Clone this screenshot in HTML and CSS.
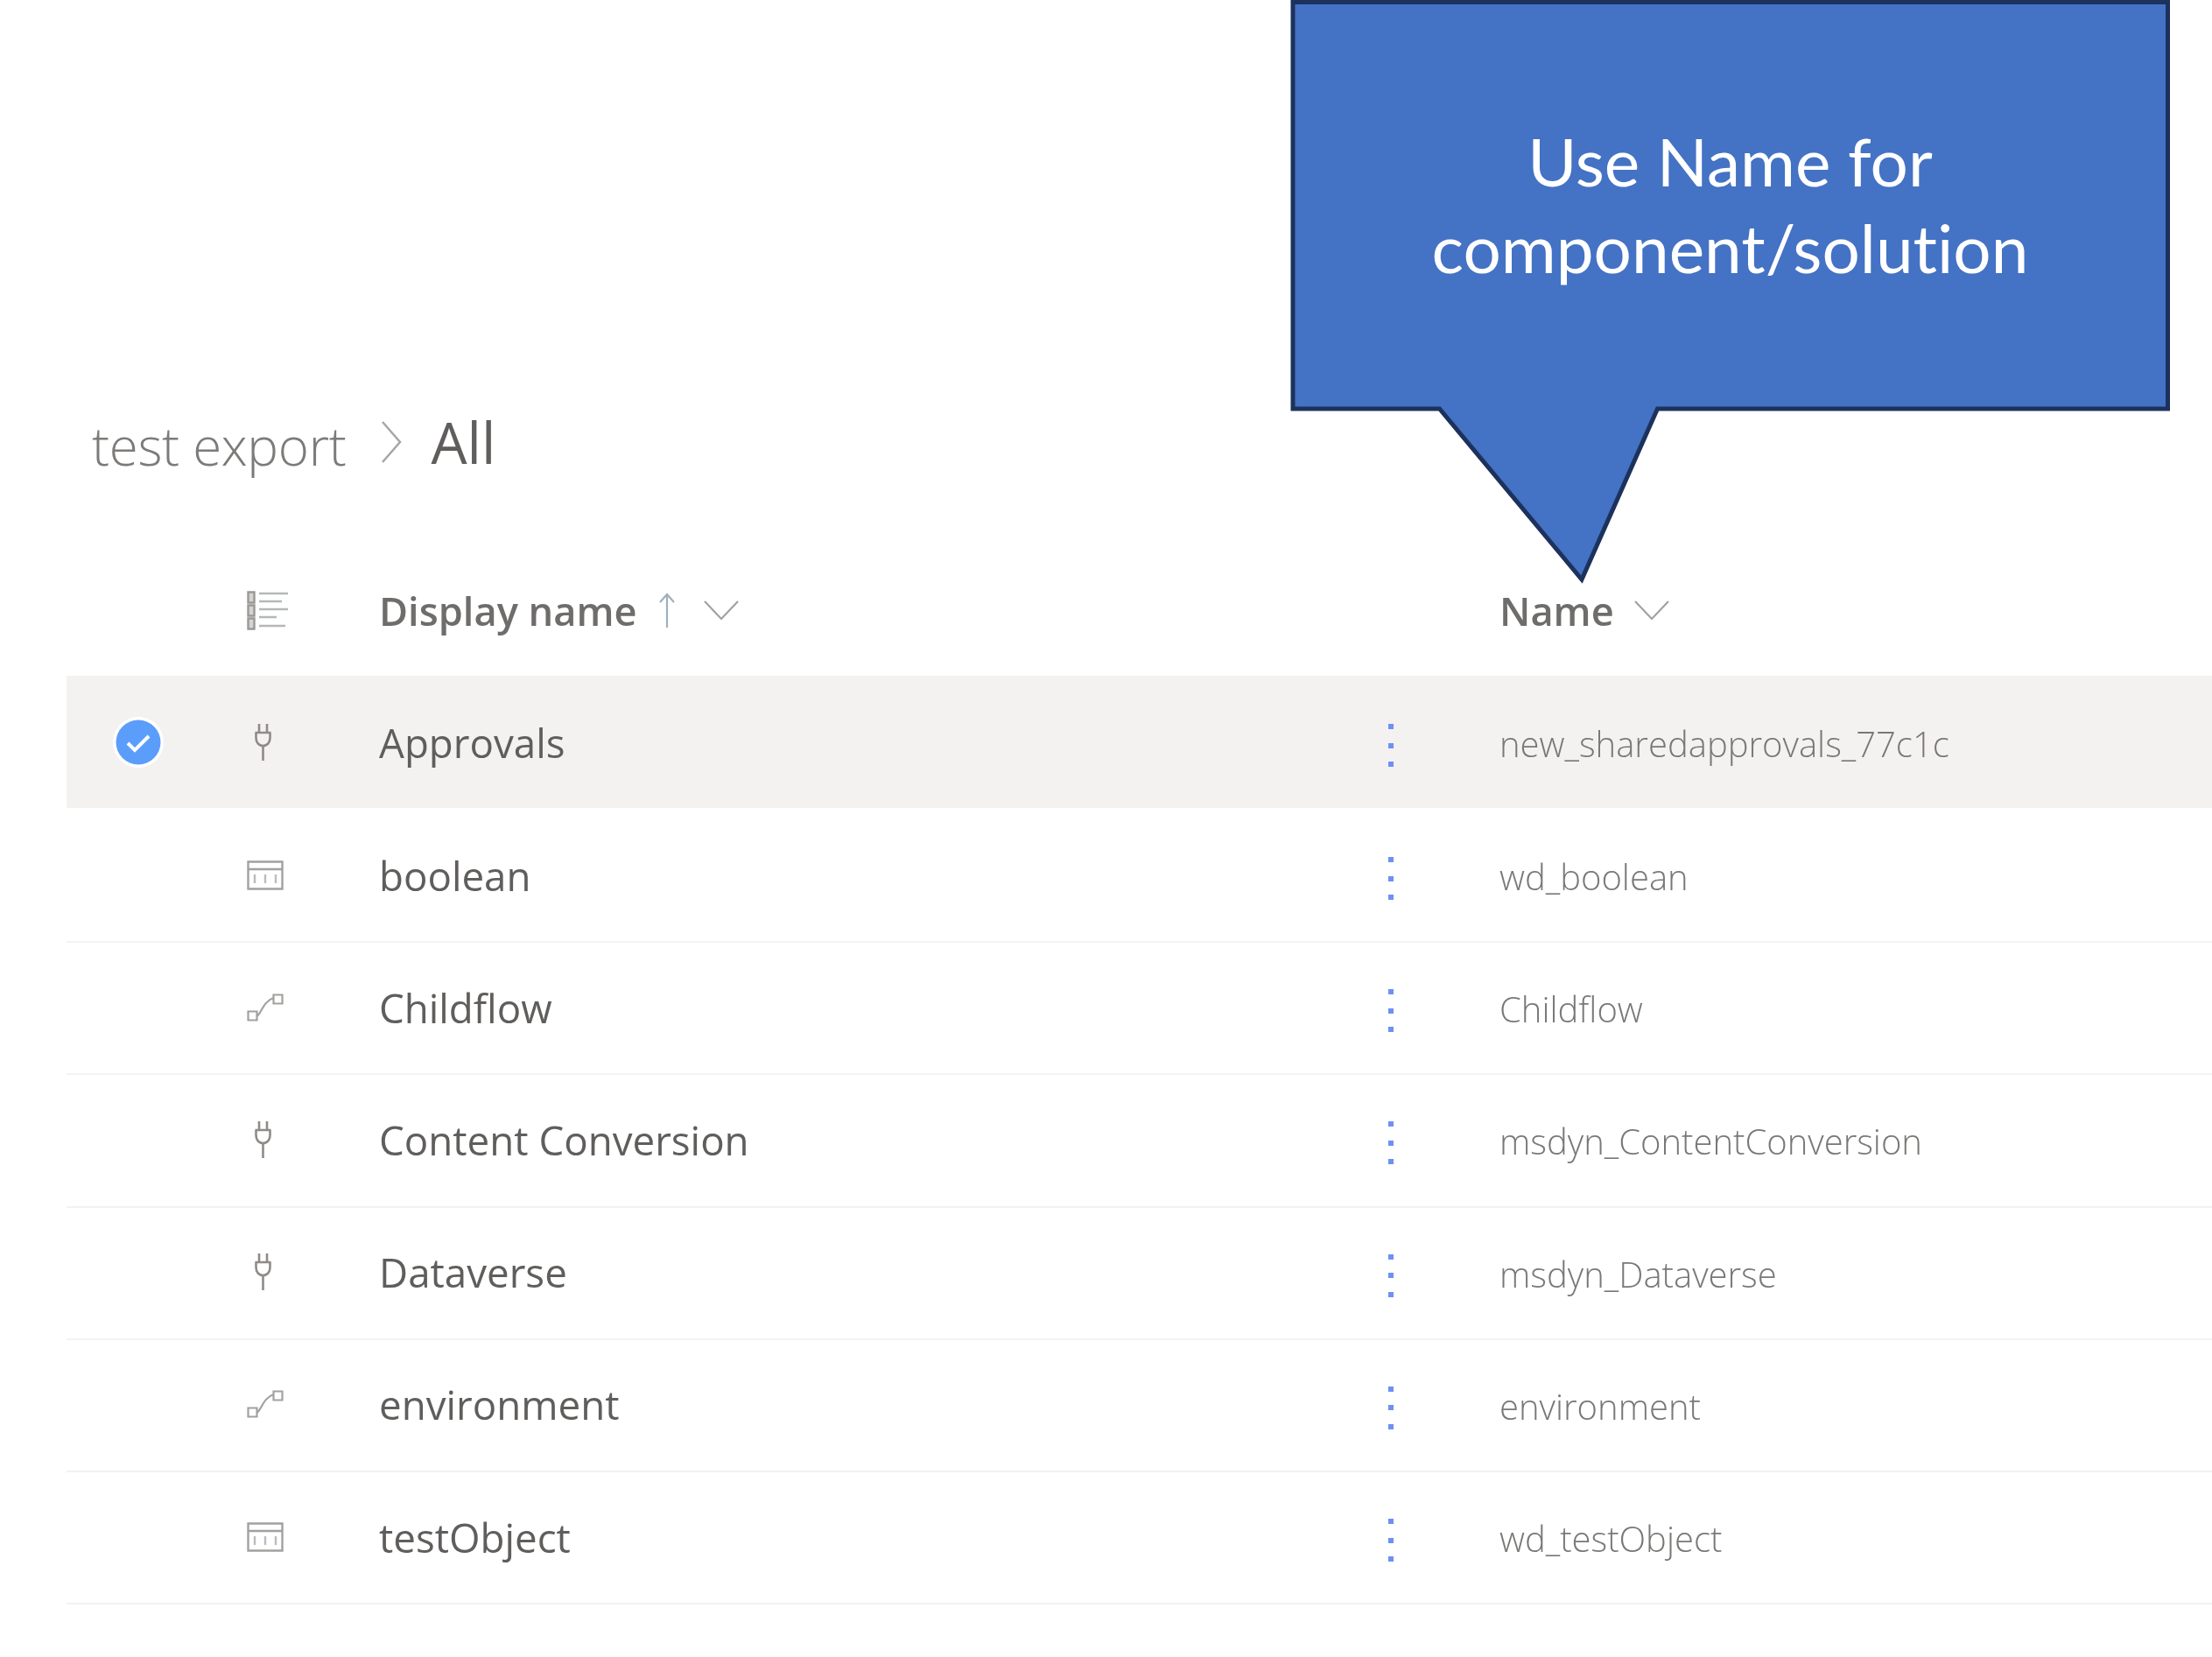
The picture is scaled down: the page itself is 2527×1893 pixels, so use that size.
FILE: index.html
```html
<!DOCTYPE html>
<html lang="en">
<head>
<meta charset="utf-8">
<title>test export - All</title>
<link rel="stylesheet" href="styles.css">
</head>
<body>
<svg class="defs" width="0" height="0" aria-hidden="true">
  <symbol id="plug" viewBox="0 0 21 42">
    <path d="M6 0v10M15 0v10M1.5 10h18M2.5 10v6c0 5 3 9 8 9s8-4 8-9v-6M10.5 25v17" fill="none" stroke="#8f8b89" stroke-width="2.6"/>
  </symbol>
  <symbol id="table" viewBox="0 0 42 34">
    <path d="M1.5 1.5h39v31h-39zM1.5 10h39" fill="none" stroke="#a3a1a0" stroke-width="2.4"/>
    <path d="M9 16v10M21 16v10M33 16v10" fill="none" stroke="#b9bcc4" stroke-width="2.4"/>
  </symbol>
  <symbol id="flow" viewBox="0 0 42 32">
    <path d="M1.5 20.500h10v10h-10zM30.500 1.500h10v10h-10zM11.500 26c5-3 7-17 19-21" fill="none" stroke="#a3a1a0" stroke-width="2.2"/>
  </symbol>
</svg>
<main class="page">
  <div class="crumbs">
    <span class="crumb">test export</span>
    <svg class="crumb-sep" viewBox="0 0 26 50"><path d="M3 2l20 23L3 48" fill="none" stroke="#a8a6a4" stroke-width="2.500"/></svg>
    <span class="crumb-now">All</span>
  </div>
  <div class="row head">
    <span></span>
    <svg class="ic-list" viewBox="0 0 47 45"><path d="M1.500 1.500h7v12h-7zM1.500 16.500h7v12h-7zM1.500 31.500h7v12h-7z" fill="#d5d4d3" stroke="#9a9896" stroke-width="2.400"/><path d="M14 3h33M14 12h26M14 21h33M14 30h20M14 40h30" fill="none" stroke="#b4b8b6" stroke-width="2.400"/></svg>
    <div class="h-cell">
      <span class="h-text">Display name</span>
      <svg class="ic-up" viewBox="0 0 20 40"><path d="M10 40V2M2 11l8-9 8 9" fill="none" stroke="#9fb1bd" stroke-width="2.200"/></svg>
      <svg class="ic-down ic-down-far" viewBox="0 0 42 24"><path d="M2 2l19 20L40 2" fill="none" stroke="#a3a1a0" stroke-width="2.200"/></svg>
    </div>
    <span></span>
    <div class="h-cell">
      <span class="h-text">Name</span>
      <svg class="ic-down" viewBox="0 0 42 24"><path d="M2 2l19 20L40 2" fill="none" stroke="#a3a1a0" stroke-width="2.200"/></svg>
    </div>
  </div>
  <div class="rows">
    <div class="row item selected">
      <span class="check"><svg viewBox="0 0 58 58"><circle cx="29" cy="29" r="29" fill="#fff"/><circle cx="29" cy="29" r="25.500" fill="#5b9dfb"/><path d="M17 30l8 8 16-16" fill="none" stroke="#fff" stroke-width="4"/></svg></span>
      <svg class="ic ic-plug"><use href="#plug"/></svg>
      <span class="dn">Approvals</span>
      <span class="more"><i></i><i></i><i></i></span>
      <span class="nm">new_sharedapprovals_77c1c</span>
    </div>
    <div class="row item">
      <span></span>
      <svg class="ic ic-table"><use href="#table"/></svg>
      <span class="dn">boolean</span>
      <span class="more"><i></i><i></i><i></i></span>
      <span class="nm">wd_boolean</span>
    </div>
    <div class="row item">
      <span></span>
      <svg class="ic ic-flow"><use href="#flow"/></svg>
      <span class="dn">Childflow</span>
      <span class="more"><i></i><i></i><i></i></span>
      <span class="nm">Childflow</span>
    </div>
    <div class="row item">
      <span></span>
      <svg class="ic ic-plug"><use href="#plug"/></svg>
      <span class="dn">Content Conversion</span>
      <span class="more"><i></i><i></i><i></i></span>
      <span class="nm">msdyn_ContentConversion</span>
    </div>
    <div class="row item">
      <span></span>
      <svg class="ic ic-plug"><use href="#plug"/></svg>
      <span class="dn">Dataverse</span>
      <span class="more"><i></i><i></i><i></i></span>
      <span class="nm">msdyn_Dataverse</span>
    </div>
    <div class="row item">
      <span></span>
      <svg class="ic ic-flow"><use href="#flow"/></svg>
      <span class="dn">environment</span>
      <span class="more"><i></i><i></i><i></i></span>
      <span class="nm">environment</span>
    </div>
    <div class="row item">
      <span></span>
      <svg class="ic ic-table"><use href="#table"/></svg>
      <span class="dn">testObject</span>
      <span class="more"><i></i><i></i><i></i></span>
      <span class="nm">wd_testObject</span>
    </div>
  </div>
</main>
<aside class="callout">
  <svg class="callout-shape" viewBox="0 0 1005 668"><path d="M3 2.500H1002.500V467H419.500L333 662 170.500 467H3z" fill="#4472c4" stroke="#1c325d" stroke-width="5"/></svg>
  <p class="callout-text">Use Name for<br>component/solution</p>
</aside>
</body>
</html>
```

FILE: styles.css
```css
html, body {
  margin: 0;
  padding: 0;
  background: #fff;
}
body {
  position: relative;
  width: 2527px;
  height: 1893px;
  overflow: hidden;
  font-family: "Open Sans", "Noto Sans", sans-serif;
}
.defs {
  position: absolute;
}
.page {
  padding-top: 463px;
  display: flex;
  flex-direction: column;
}
.crumbs {
  height: 84px;
  padding-left: 105px;
  display: flex;
  align-items: center;
  filter: blur(0.7px);
}
.crumb {
  font-size: 60px;
  font-weight: 300;
  color: #7d7b79;
  letter-spacing: -0.3px;
  position: relative;
  top: 4px;
}
.crumb-sep {
  width: 26px;
  height: 50px;
  margin: 0 32px 0 39px;
}
.crumb-now {
  font-size: 65px;
  font-weight: 400;
  color: #605e5c;
}
.row {
  display: grid;
  grid-template-columns: 164px 193px 1127px 153px 1fr;
  align-items: center;
  margin-left: 76px;
}
.head {
  box-sizing: border-box;
  height: 225px;
  padding-top: 75px;
}
.h-cell {
  display: flex;
  align-items: center;
  white-space: nowrap;
  filter: blur(0.6px);
}
.h-text {
  font-size: 45.200px;
  font-weight: 600;
  color: #6f6d6b;
}
.ic-list {
  width: 47px;
  height: 45px;
  margin-left: 42px;
  filter: blur(0.5px);
}
.ic-up {
  flex: none;
  width: 20px;
  height: 40px;
  margin-left: 24px;
}
.ic-down {
  flex: none;
  width: 42px;
  height: 24px;
  margin-left: 22px;
}
.ic-down-far {
  margin-left: 31px;
}
.rows {
  display: flex;
  flex-direction: column;
}
.item {
  height: 147.200px;
  padding-bottom: 2px;
  border-bottom: 2px solid #f3f2f1;
}
.selected {
  height: 151px;
  padding-bottom: 0;
  border-bottom: 0;
  margin-bottom: 3px;
  background: #f3f2f1;
}
.check {
  display: flex;
  justify-content: center;
}
.check svg {
  width: 58px;
  height: 58px;
}
.ic {
  filter: blur(0.5px);
}
.ic-plug {
  width: 21px;
  height: 42px;
  margin-left: 50px;
}
.ic-table {
  width: 42px;
  height: 34px;
  margin-left: 42px;
}
.ic-flow {
  width: 42px;
  height: 32px;
  margin-left: 42px;
}
.dn {
  font-size: 45.700px;
  color: #605e5c;
  white-space: nowrap;
  filter: blur(0.6px);
}
.more {
  display: flex;
  flex-direction: column;
  gap: 15.500px;
  margin-left: 26px;
  padding-top: 8px;
}
.more i {
  display: block;
  width: 6px;
  height: 6px;
  background: #6e90f5;
}
.nm {
  font-size: 40px;
  font-weight: 300;
  color: #7a7876;
  white-space: nowrap;
  filter: blur(0.6px);
  padding-top: 4px;
}
.callout {
  position: absolute;
  left: 1474px;
  top: 0;
  width: 1005px;
  height: 668px;
}
.callout-shape {
  position: absolute;
  inset: 0;
  width: 100%;
  height: 100%;
}
.callout-text {
  position: relative;
  margin: 0;
  padding-top: 134px;
  font-family: Lato, "Open Sans", sans-serif;
  font-size: 76.500px;
  font-variant-ligatures: none;
  line-height: 99px;
  color: #fff;
  text-align: center;
}
```
